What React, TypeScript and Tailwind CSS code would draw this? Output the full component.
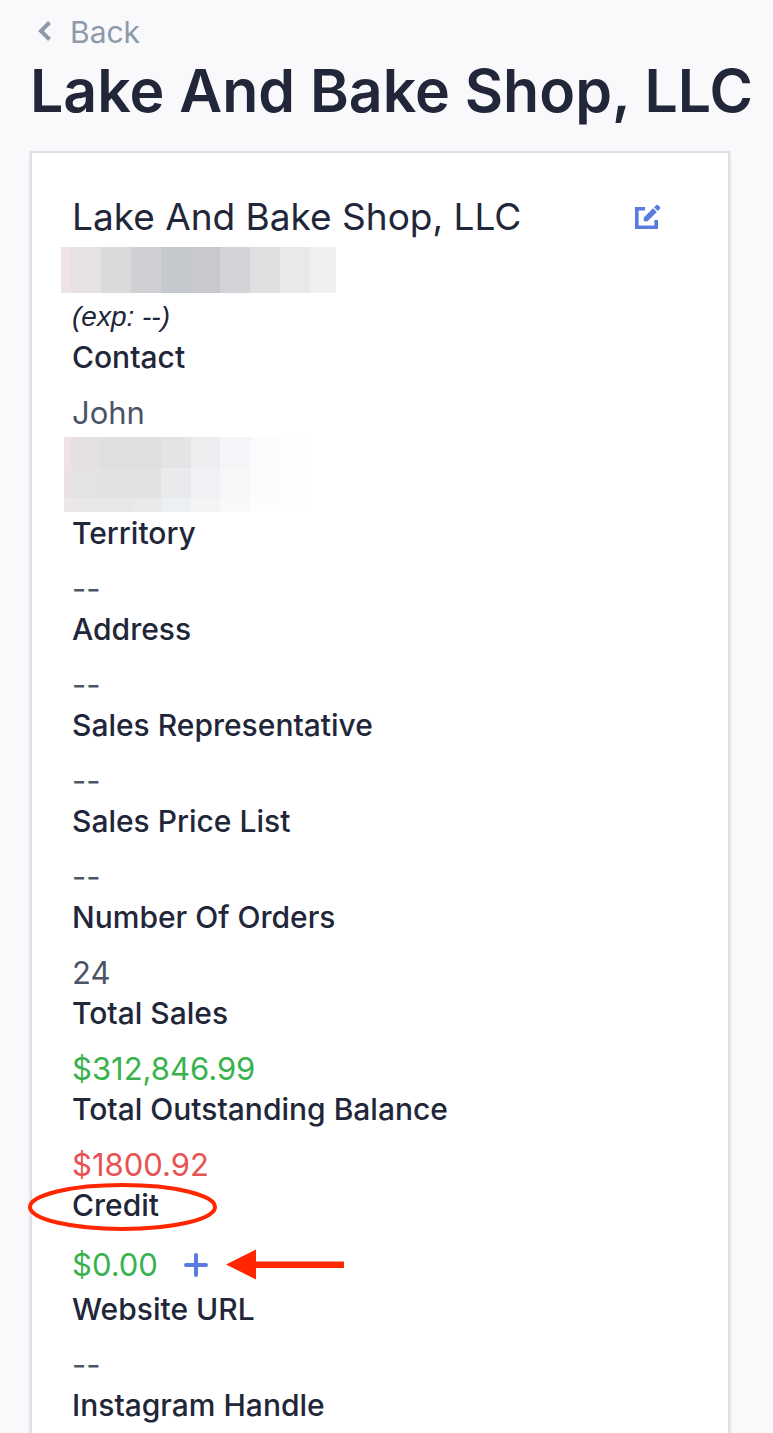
import type { ReactNode } from 'react';

interface Field {
    label: string;
    value?: string;
    tone?: string;
    extra?: ReactNode;
    circled?: boolean;
    valueHeight?: string;
}

// One colour per block, left to right
const LICENSE_BLOCKS = [
    'w-[10px] bg-[#eee4e4]',
    'w-[30px] bg-[#e6e1e2]',
    'w-[30px] bg-[#dadadb]',
    'w-[30px] bg-[#cfd0d4]',
    'w-[30px] bg-[#c5c8cc]',
    'w-[29px] bg-[#c8c9cd]',
    'w-[30px] bg-[#d3d4d8]',
    'w-[30px] bg-[#dedfe1]',
    'w-[30px] bg-[#e8e9ea]',
    'w-[26px] bg-[#eff0f2]',
];

const CONTACT_BLOCKS = [
    {
        height: 'h-[31px]',
        cells: [
            'w-[7px] bg-[#eee2e2]',
            'w-[30px] bg-[#e5e1e2]',
            'w-[30px] bg-[#dedfe0]',
            'w-[30px] bg-[#dddfe0]',
            'w-[30px] bg-[#e3e4e6]',
            'w-[29px] bg-[#ebedee]',
            'w-[30px] bg-[#f3f5f8]',
            'w-[30px] bg-[#fbfbfb]',
            'w-[30px] bg-[#fefefe]',
        ],
    },
    {
        height: 'h-[30px]',
        cells: [
            'w-[7px] bg-[#ede2e3]',
            'w-[30px] bg-[#e5e2e3]',
            'w-[30px] bg-[#e1e2e3]',
            'w-[30px] bg-[#e2e2e4]',
            'w-[30px] bg-[#e8eaeb]',
            'w-[29px] bg-[#eff1f4]',
            'w-[30px] bg-[#f7f7f7]',
            'w-[30px] bg-[#fcfcfc]',
            'w-[30px] bg-[#fefefe]',
        ],
    },
    {
        height: 'h-[14px]',
        cells: [
            'w-[7px] bg-[#eee7e8]',
            'w-[30px] bg-[#e9e7e8]',
            'w-[30px] bg-[#e6e7e6]',
            'w-[30px] bg-[#e8e9eb]',
            'w-[30px] bg-[#edf0f2]',
            'w-[29px] bg-[#f4f4f4]',
            'w-[30px] bg-[#f9f9f9]',
            'w-[30px] bg-[#fdfdfd]',
            'w-[30px] bg-[#fefefe]',
        ],
    },
];

function BackIcon() {
    return (
        <svg width="14" height="22" viewBox="0 0 14 22" fill="none" aria-hidden="true">
            <path d="M11.5 1.5 3 10l8.5 8.5" stroke="currentColor" strokeWidth="4" />
        </svg>
    );
}

function EditIcon() {
    return (
        <svg width="28" height="28" viewBox="0 0 28 28" fill="none" aria-hidden="true">
            <path d="M11 5.800H2.800v18.400h19.400V17" stroke="currentColor" strokeWidth="3.6" />
            <path
                d="M9.800 18.200v-3.800L19 5.200l3.800 3.800-9.200 9.200zM20 4.200l1.800-1.800c.8-.8 1.800-.8 2.600 0l1.200 1.200c.8.8.8 1.800 0 2.600L23.800 8z"
                fill="currentColor"
            />
        </svg>
    );
}

function PlusIcon() {
    return (
        <svg width="24" height="24" viewBox="0 0 24 24" fill="none" aria-hidden="true">
            <path d="M12 2v20M2 12h20" stroke="currentColor" strokeWidth="4" strokeLinecap="round" />
        </svg>
    );
}

function ArrowMark() {
    return (
        <svg
            className="pointer-events-none shrink-0"
            width="118"
            height="32"
            viewBox="0 0 118 32"
            aria-hidden="true"
        >
            <path d="M0 15.5 30 .5v12h88v6.500H30v11.500z" fill="#ff2600" />
        </svg>
    );
}

function CircleMark() {
    return (
        <svg
            className="pointer-events-none absolute -left-11 top-0 -mt-0.5"
            width="190"
            height="48"
            viewBox="0 0 190 48"
            fill="none"
            aria-hidden="true"
        >
            <ellipse cx="94.500" cy="24" rx="92.500" ry="22" stroke="#ff2600" strokeWidth="4" />
        </svg>
    );
}

const FIELDS: Field[] = [
    { label: 'Territory', value: '--' },
    { label: 'Address', value: '--' },
    { label: 'Sales Representative', value: '--' },
    { label: 'Sales Price List', value: '--' },
    { label: 'Number Of Orders', value: '24' },
    { label: 'Total Sales', value: '$312,846.99', tone: 'text-[#37b24d]' },
    { label: 'Total Outstanding Balance', value: '$1800.92', tone: 'text-[#e85252]' },
    {
        label: 'Credit',
        value: '$0.00',
        tone: 'text-[#37b24d]',
        circled: true,
        valueHeight: 'h-12',
        extra: (
            <>
                <button type="button" aria-label="Add credit" className="ml-[26px] text-[#5a7be0]">
                    <PlusIcon />
                </button>
                <span className="ml-[18px]">
                    <ArrowMark />
                </span>
            </>
        ),
    },
    { label: 'Website URL', value: '--' },
    { label: 'Instagram Handle' },
];

function FieldRow({ field }: { field: Field }) {
    return (
        <div>
            <dt className="relative text-[30px] leading-10 font-medium text-[#212638]">
                {field.label}
                {field.circled && <CircleMark />}
            </dt>
            {field.value && (
                <dd
                    className={`mt-4 flex items-center text-[31px] leading-10 ${
                        field.tone ?? 'text-[#4a5465]'
                    } ${field.valueHeight ?? 'h-10'}`}
                >
                    {field.value}
                    {field.extra}
                </dd>
            )}
        </div>
    );
}

export default function App() {
    return (
        <main className="flex min-h-screen flex-col overflow-x-hidden bg-[#f9f9fc] pr-[43px] pl-[30px] font-['Inter','Liberation_Sans',sans-serif] text-[#212638]">
            <a
                href="#back"
                className="mt-3 ml-2 flex items-center gap-[18px] self-start text-[30px] leading-10 text-[#8d99a9]"
            >
                <BackIcon />
                Back
            </a>
            <h1 className="text-[59px] leading-[78px] font-semibold whitespace-nowrap">
                Lake And Bake Shop, LLC
            </h1>

            <section className="mt-[21px] flex-1 border-2 border-b-0 border-[#dfdfe5] bg-white px-10 pt-10 shadow-sm">
                {/* Header */}
                <div className="flex items-center justify-between pr-[26px]">
                    <h2 className="text-[37px] leading-[48px]">Lake And Bake Shop, LLC</h2>
                    <button type="button" aria-label="Edit customer" className="text-[#5a7be0]">
                        <EditIcon />
                    </button>
                </div>
                <div className="mt-1.5 -ml-[11px] flex h-[46px]">
                    {LICENSE_BLOCKS.map((cell, index) => (
                        <div key={index} className={cell} />
                    ))}
                </div>
                <p className="mt-1 font-['Liberation_Sans',sans-serif] text-[28px] leading-10 italic">
                    (exp: --)
                </p>

                {/* Details */}
                <dl>
                    <FieldRow field={{ label: 'Contact', value: 'John' }} />
                    <dd className="-ml-2 pt-1 pb-px">
                        {CONTACT_BLOCKS.map(row => (
                            <div key={row.height} className={`flex ${row.height}`}>
                                {row.cells.map((cell, index) => (
                                    <div key={index} className={cell} />
                                ))}
                            </div>
                        ))}
                    </dd>
                    {FIELDS.map(field => (
                        <FieldRow key={field.label} field={field} />
                    ))}
                </dl>
            </section>
        </main>
    );
}
